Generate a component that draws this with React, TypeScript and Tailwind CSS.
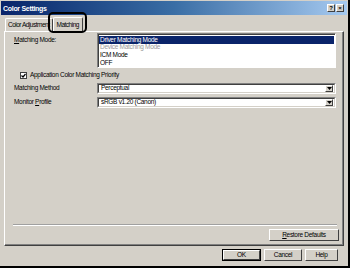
import React from "react";

const font = { fontFamily: '"Liberation Sans", Arial, sans-serif' };

function Btn({ children, w, def }: { children: React.ReactNode; w: string; def?: boolean }) {
  return (
    <div className={`${w} h-[12px] ${def ? "border border-black" : ""} flex`}>
      <div className="flex-1 border-t border-l border-white border-r border-b border-r-[#404040] border-b-[#404040] bg-[#d4d0c8] flex items-center justify-center text-[6.5px] tracking-[-0.3px] text-black leading-none">
        {children}
      </div>
    </div>
  );
}

function Combo({ value }: { value: string }) {
  return (
    <div className="w-[239px] h-[11px] border-t border-l border-[#808080] border-r border-b border-r-white border-b-white flex">
      <div className="flex-1 border-t border-l border-[#404040] border-r border-b border-r-[#d4d0c8] border-b-[#d4d0c8] bg-white flex items-center">
        <span className="flex-1 pl-[2px] text-[6.5px] tracking-[-0.3px] leading-none">{value}</span>
        <div className="w-[8px] h-[7px] mr-[1px] bg-[#d4d0c8] border-t border-l border-white border-r border-b border-r-[#404040] border-b-[#404040] flex items-center justify-center">
          <svg width="5" height="3" viewBox="0 0 5 3"><path d="M0 0h5L2.5 3z" fill="black" /></svg>
        </div>
      </div>
    </div>
  );
}

export default function App() {
  return (
    <div style={font} className="w-[350px] h-[268px] bg-[#d4d0c8] border-r-2 border-b-2 border-black flex flex-col overflow-hidden select-none">
      {/* Title bar */}
      <div className="h-[14px] mx-[1px] mt-[1px] bg-gradient-to-r from-[#0a246a] via-[#3a6ea5] to-[#a6caf0] flex items-center pl-[2px] pr-[3px]">
        <span className="text-white font-bold text-[7px] tracking-[-0.3px] leading-none flex-1">Color Settings</span>
        <div className="flex gap-[1px]">
          <div className="w-[8px] h-[8px] bg-[#d4d0c8] border-t border-l border-white border-r border-b border-r-[#404040] border-b-[#404040] flex items-center justify-center text-[6px] font-bold leading-none">?</div>
          <div className="w-[8px] h-[8px] bg-[#d4d0c8] border-t border-l border-white border-r border-b border-r-[#404040] border-b-[#404040] flex items-center justify-center text-[6px] font-bold leading-none">×</div>
        </div>
      </div>

      <div className="flex-1 flex flex-col pl-[4px] pr-[4px]">
        {/* Tabs */}
        <div className="h-[16px] flex items-end pl-[1px] relative">
          <div className="h-[13px] px-[2px] border-t border-l border-white border-r border-r-[#404040] rounded-t-[2px] flex items-center text-[6.5px] tracking-[-0.5px] leading-none">
            Color Adjustment
          </div>
          <div className="h-[15px] -mb-[1px] px-[3px] bg-[#d4d0c8] border-t border-l border-white border-r border-r-[#404040] rounded-t-[2px] flex items-center text-[6.5px] tracking-[-0.5px] leading-none relative z-10">
            Matching
          </div>
          <div className="absolute left-[44px] top-[-3px] w-[39px] h-[21px] border-2 border-black rounded-[5px] z-20" />
        </div>

        {/* Panel */}
        <div className="h-[215px] border-t border-l border-white border-r border-b border-r-[#404040] border-b-[#404040] flex flex-col text-[6.5px] tracking-[-0.3px] leading-none">
          <div className="flex flex-col flex-1 border-r border-b border-r-[#808080] border-b-[#808080]">
            <div className="flex pt-[1px] pl-[9px]">
              <span className="w-[83px] pt-[4px]"><u>M</u>atching Mode:</span>
              <div className="w-[239px] h-[35px] border-t border-l border-[#808080] border-r border-b border-r-white border-b-white flex">
                <div className="flex-1 border-t border-l border-[#404040] bg-white flex flex-col pt-[1px] pr-[1px]">
                  <div className="h-[8px] bg-[#0a246a] text-white flex items-center pl-[1px]">Driver Matching Mode</div>
                  <div className="h-[8px] text-[#9a9a9a] flex items-center pl-[1px]">Device Matching Mode</div>
                  <div className="h-[8px] text-black flex items-center pl-[1px]">ICM Mode</div>
                  <div className="h-[8px] text-black flex items-center pl-[1px]">OFF</div>
                </div>
              </div>
            </div>

            <div className="flex items-center pl-[15px] mt-[3px] h-[8px]">
              <div className="w-[7px] h-[7px] bg-white border border-[#404040] flex items-center justify-center mr-[3px]">
                <svg width="5" height="5" viewBox="0 0 5 5"><path d="M0.5 2.5L2 4L4.5 1" stroke="black" strokeWidth="1.2" fill="none" /></svg>
              </div>
              <span>Application Color Matching Priority</span>
            </div>

            <div className="flex items-center pl-[9px] mt-[4px]">
              <span className="w-[83px]">Matching Method</span>
              <Combo value="Perceptual" />
            </div>

            <div className="flex items-center pl-[9px] mt-[3px]">
              <span className="w-[83px]">Monitor <u>P</u>rofile</span>
              <Combo value="sRGB v1.20 (Canon)" />
            </div>

            <div className="flex-1" />
            <div className="ml-[8px] mr-[5px] border-t border-[#a0a0a0] border-b border-b-white" />
            <div className="flex justify-end pr-[3px] pt-[3px] pb-[3px]">
              <Btn w="w-[70px]"><u>R</u>estore Defaults</Btn>
            </div>
          </div>
        </div>

        {/* Bottom buttons */}
        <div className="flex justify-end gap-[3px] pr-[6px] mt-[3px]">
          <Btn w="w-[39px]" def>OK</Btn>
          <Btn w="w-[38px]">Cancel</Btn>
          <Btn w="w-[33px]">Help</Btn>
        </div>
      </div>
    </div>
  );
}
